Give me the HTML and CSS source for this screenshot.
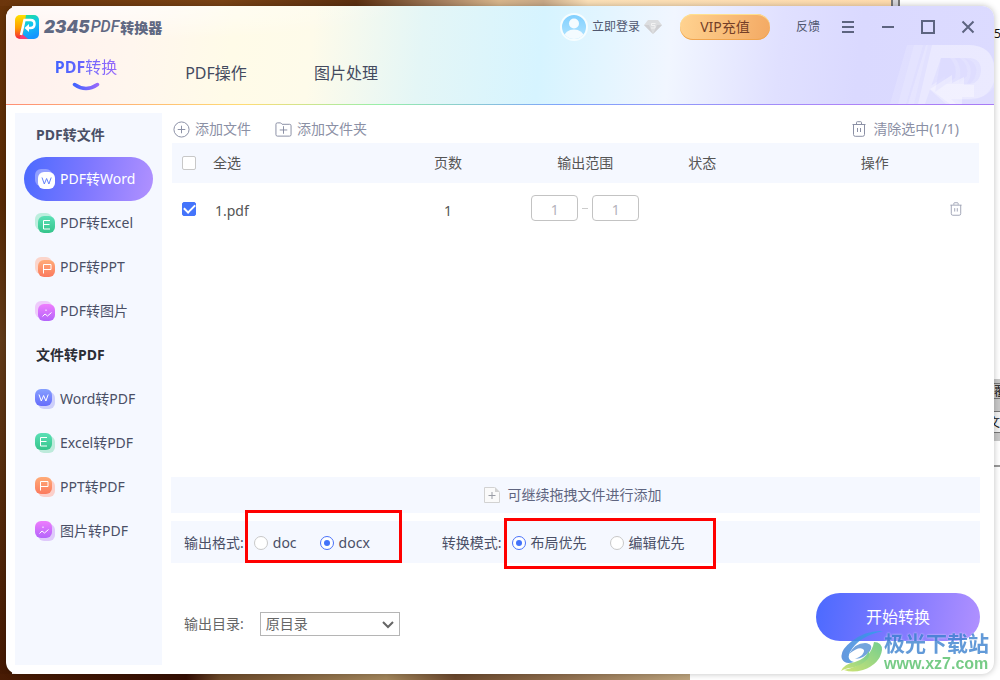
FILE: index.html
```html
<!DOCTYPE html>
<html lang="zh-CN">
<head>
<meta charset="utf-8">
<meta name="viewport" content="width=device-width, initial-scale=1">
<title>2345PDF转换器</title>
<link rel="stylesheet" href="styles.css">
</head>
<body>
<svg class="defs" width="0" height="0" aria-hidden="true">
  <defs>
    <linearGradient id="g-word" x1="0" y1="0" x2="0" y2="1"><stop offset="0" stop-color="#86a0ff"/><stop offset="1" stop-color="#666cfb"/></linearGradient>
    <linearGradient id="g-excel" x1="0" y1="0" x2="0" y2="1"><stop offset="0" stop-color="#5be0b6"/><stop offset="1" stop-color="#35c48b"/></linearGradient>
    <linearGradient id="g-ppt" x1="0" y1="0" x2="0" y2="1"><stop offset="0" stop-color="#ffac78"/><stop offset="1" stop-color="#fb7a5e"/></linearGradient>
    <linearGradient id="g-img" x1="0" y1="0" x2="0" y2="1"><stop offset="0" stop-color="#ee7dfd"/><stop offset="1" stop-color="#b464fb"/></linearGradient>
    <path id="m-word" d="M4 5.500l2.300 6.500 2.300-5.500 2.300 5.500L13.200 5.500" />
    <path id="m-excel" d="M12 4.500H5.500v8.500H12M5.500 8.500h6" />
    <path id="m-ppt" d="M5.500 13.500V4.500h7.500v5h-7.500" />
    <path id="m-img" d="M4.500 12.500l2.500-2.500 2.500 2 4-3.500M8 5.500v1.500" />
    <symbol id="trash" viewBox="0 0 14 16"><path d="M.5 3.500h13M4.500 3V1.500q0-.8.800-.8h3.400q.8 0 .8.800V3M1.500 3.500v10q0 1.800 1.800 1.800h7.400q1.800 0 1.800-1.800v-10M5.500 7v4M8.500 7v4" fill="none" stroke="currentColor"/></symbol>
  </defs>
</svg>

<div class="desktop" aria-hidden="true">
  <div class="desktop-frame"></div>
  <div class="desktop-strip">
    <span class="strip-digit">5</span>
    <div class="strip-panel"><span class="strip-cell">覆</span><span class="strip-cell strip-cell-light">文</span></div>
  </div>
</div>

<div class="window">
  <header class="header">
    <svg class="header-art" viewBox="0 0 104 59" aria-hidden="true">
      <g fill="#fff">
        <path opacity=".15" d="M17 0h16L16 59H0z"/>
        <path opacity=".15" d="M24 0h14L24 59H8z"/>
        <path opacity=".2" d="M36 0h42q24 0 26 22v37H18z"/>
      </g>
      <path fill="#fff" opacity=".28" d="M42 0h38q20 1 24 18v19q-6 17-24 18H67l5 4H56l-18-16 17-12v8h25q10-1 11-13 0-12-11-13H51L35 59H28z"/>
      <path fill="#dcdbff" d="M51 13h9q8 8 5 20l-20 14z" opacity=".8"/>
      <path fill="#dcdbff" d="M65 13h5q9 7 7 18l-8 7q4-16-4-25zM74 13q14 3 12 16-2 9-9 10 9-16-3-26zM66 59l-5-5h18q17 0 25-12v17z" opacity=".6"/>
      <path fill="#fff" opacity=".35" d="M40 44l22-14v8l12-6v8h10v12H72v7H60z"/>
    </svg>
    <div class="titlebar">
      <h1 class="brand">
        <svg class="brand-icon" viewBox="0 0 24 24" aria-hidden="true">
          <defs>
            <linearGradient id="b1" x1="0" y1="0" x2="0" y2="1"><stop offset="0" stop-color="#ffe000"/><stop offset=".55" stop-color="#ff9b00"/><stop offset="1" stop-color="#f4203f"/></linearGradient>
            <linearGradient id="b2" x1="0" y1="0" x2=".3" y2="1"><stop offset="0" stop-color="#25e28d"/><stop offset=".5" stop-color="#11c6ee"/><stop offset="1" stop-color="#1596ff"/></linearGradient>
            <clipPath id="bc"><rect width="24" height="24" rx="5"/></clipPath>
          </defs>
          <g clip-path="url(#bc)"><path fill="url(#b1)" d="M0 0h13L8 24H0z"/><path fill="url(#b2)" d="M11 0h13v24H7z"/><path fill="#f53d78" d="M4 24l3-5 6 5z"/></g>
          <path fill="none" stroke="#fff" stroke-width="2.500" d="M6 20L9.500 5h6q4 0 4 4t-4 4h-3"/>
          <path fill="#fff" d="M14 9v8L9.500 13z"/>
        </svg>
        <span class="brand-num">2345</span><span class="brand-pdf">PDF</span><span class="brand-cn">转换器</span>
      </h1>
      <button class="login" type="button">
        <svg class="avatar" viewBox="0 0 28 28" aria-hidden="true">
          <defs><linearGradient id="av" x1="0" y1="0" x2="0" y2="1"><stop offset="0" stop-color="#7fcfff"/><stop offset="1" stop-color="#b4e5ff"/></linearGradient><clipPath id="ac"><circle cx="14" cy="14" r="12"/></clipPath></defs>
          <circle cx="14" cy="14" r="13" fill="url(#av)" stroke="#f6fdff" stroke-width="2"/>
          <circle cx="14" cy="10.500" r="5" fill="#f4fbff"/><ellipse cx="14" cy="24" rx="10" ry="7.500" fill="#f4fbff" clip-path="url(#ac)"/>
        </svg>
        <span>立即登录</span>
        <svg class="gem" viewBox="0 0 18 14" aria-hidden="true"><path fill="#dcdddf" d="M4 0h10l4 5-9 9-9-9z"/><path fill="#cfcfd2" d="M0 5h5l4 9zM18 5h-5l-4 9z"/><path fill="none" stroke="#f2f2f2" d="M11.500 3.500h-4v2h3.500v2.500h-4"/></svg>
      </button>
      <button class="vip" type="button">VIP充值</button>
      <button class="ctl feedback" type="button">反馈</button>
      <button class="ctl" type="button" aria-label="菜单"><svg viewBox="0 0 14 14"><path d="M1 2h12M1 7h12M1 12h12"/></svg></button>
      <button class="ctl" type="button" aria-label="最小化"><svg viewBox="0 0 14 14"><path d="M1 7h12"/></svg></button>
      <button class="ctl" type="button" aria-label="最大化"><svg viewBox="0 0 14 14"><path d="M1 1h12v12H1z"/></svg></button>
      <button class="ctl" type="button" aria-label="关闭"><svg viewBox="0 0 14 14"><path d="M1.500 1.500l11 11M12.500 1.500l-11 11"/></svg></button>
    </div>
    <nav class="tabs">
      <a class="tab tab-active" href="#convert"><span class="tab-label"><b>PDF</b>转换</span>
        <svg class="smile" viewBox="0 0 28 9" aria-hidden="true"><defs><linearGradient id="sm"><stop offset="0" stop-color="#4263ff"/><stop offset="1" stop-color="#9769fb"/></linearGradient></defs><path d="M2.500 2.500q11.500 8 23 0" fill="none" stroke="url(#sm)" stroke-width="3.500" stroke-linecap="round"/></svg>
      </a>
      <a class="tab" href="#operate">PDF操作</a>
      <a class="tab" href="#image">图片处理</a>
    </nav>
  </header>

  <div class="content">
    <aside class="sidebar">
      <h2 class="side-title">PDF转文件</h2>
      <a class="side-item side-active" href="#w"><svg class="ico" viewBox="0 0 20 20"><rect width="17" height="17" rx="6" fill="#fff" opacity=".35"/><rect x="3" y="3" width="17" height="17" rx="6" fill="#fff"/><use class="ink" href="#m-word" x="3" y="3"/></svg>PDF转Word</a>
      <a class="side-item" href="#e"><svg class="ico" viewBox="0 0 20 20"><rect width="17" height="17" rx="6" fill="#bdeede"/><rect x="3" y="3" width="17" height="17" rx="6" fill="url(#g-excel)"/><use href="#m-excel" x="3" y="3"/></svg>PDF转Excel</a>
      <a class="side-item" href="#p"><svg class="ico" viewBox="0 0 20 20"><rect width="17" height="17" rx="6" fill="#fbd5cb"/><rect x="3" y="3" width="17" height="17" rx="6" fill="url(#g-ppt)"/><use href="#m-ppt" x="3" y="3"/></svg>PDF转PPT</a>
      <a class="side-item" href="#i"><svg class="ico" viewBox="0 0 20 20"><rect width="17" height="17" rx="6" fill="#eecbfb"/><rect x="3" y="3" width="17" height="17" rx="6" fill="url(#g-img)"/><use href="#m-img" x="3" y="3"/></svg>PDF转图片</a>
      <h2 class="side-title side-title-dark">文件转PDF</h2>
      <a class="side-item" href="#wp"><svg class="ico" viewBox="0 0 20 20"><rect x="3" y="3" width="17" height="17" rx="6" fill="#cdcffb"/><rect width="17" height="17" rx="6" fill="url(#g-word)"/><use href="#m-word"/></svg>Word转PDF</a>
      <a class="side-item" href="#ep"><svg class="ico" viewBox="0 0 20 20"><rect x="3" y="3" width="17" height="17" rx="6" fill="#bdeadb"/><rect width="17" height="17" rx="6" fill="url(#g-excel)"/><use href="#m-excel"/></svg>Excel转PDF</a>
      <a class="side-item" href="#pp"><svg class="ico" viewBox="0 0 20 20"><rect x="3" y="3" width="17" height="17" rx="6" fill="#fbcfca"/><rect width="17" height="17" rx="6" fill="url(#g-ppt)"/><use href="#m-ppt"/></svg>PPT转PDF</a>
      <a class="side-item" href="#ip"><svg class="ico" viewBox="0 0 20 20"><rect x="3" y="3" width="17" height="17" rx="6" fill="#dfc9fb"/><rect width="17" height="17" rx="6" fill="url(#g-img)"/><use href="#m-img"/></svg>图片转PDF</a>
    </aside>

    <main class="main">
      <div class="toolbar">
        <button class="tool" type="button"><svg class="tool-add" viewBox="0 0 18 18"><circle cx="9" cy="9" r="8"/><path d="M9 5v8M5 9h8"/></svg>添加文件</button>
        <button class="tool" type="button"><svg class="tool-add" viewBox="0 0 18 18"><path d="M1 14.500v-11Q1 2 2.500 2H6l1.500 1.500h8q1.500 0 1.500 1.500v9.500q0 1.500-1.500 1.500h-13Q1 16 1 14.500zM9 5.500v8M5 9.500h8"/></svg>添加文件夹</button>
        <button class="tool tool-clear" type="button"><svg class="trash-lg"><use href="#trash"/></svg>清除选中(1/1)</button>
      </div>
      <table class="files">
        <colgroup><col class="c-check"><col class="c-name"><col class="c-pages"><col class="c-range"><col class="c-state"><col></colgroup>
        <thead><tr>
          <th><input class="check" type="checkbox" id="all"></th>
          <th class="left"><label for="all">全选</label></th><th>页数</th><th>输出范围</th><th>状态</th><th class="ops">操作</th>
        </tr></thead>
        <tbody><tr>
          <td><input class="check" type="checkbox" id="f1" checked></td>
          <td class="left low"><label for="f1">1.pdf</label></td><td class="low">1</td>
          <td><div class="range"><input class="page" type="text" value="1" aria-label="起始页"><span class="dash"></span><input class="page" type="text" value="1" aria-label="结束页"></div></td>
          <td></td>
          <td class="del"><button type="button" aria-label="删除"><svg class="trash-sm"><use href="#trash"/></svg></button></td>
        </tr></tbody>
      </table>

      <div class="drop">
        <svg class="drop-icon" viewBox="0 0 16 16" aria-hidden="true"><path d="M.5.500h10l5 5v10H.5z" fill="#fafafa" stroke="#d2d2d2"/><path d="M11 0l5 5h-5z" fill="#d2d2d2"/><path d="M8 5v7M4.500 8.500h7" stroke="#999ca5" fill="none"/></svg>
        可继续拖拽文件进行添加
      </div>
      <div class="options">
        <div class="opt opt-format" role="radiogroup" aria-labelledby="lf">
          <span id="lf">输出格式:</span>
          <div class="choices marked mark-format">
            <label class="choice"><input class="radio" type="radio" name="fmt">doc</label>
            <label class="choice"><input class="radio" type="radio" name="fmt" checked>docx</label>
          </div>
        </div>
        <div class="opt" role="radiogroup" aria-labelledby="lm">
          <span id="lm">转换模式:</span>
          <div class="choices marked mark-mode">
            <label class="choice"><input class="radio" type="radio" name="mode" checked>布局优先</label>
            <label class="choice"><input class="radio" type="radio" name="mode">编辑优先</label>
          </div>
        </div>
      </div>
      <div class="footer">
        <label for="dir">输出目录:</label>
        <div class="select-wrap">
          <select id="dir"><option>原目录</option></select>
          <svg viewBox="0 0 12 8" aria-hidden="true"><path d="M1 1l5 5 5-5" fill="none" stroke="#666" stroke-width="2"/></svg>
        </div>
        <button class="start" type="button">开始转换</button>
      </div>
    </main>
  </div>
</div>

<div class="stamp">
  <svg viewBox="0 0 42 42" aria-hidden="true">
    <defs><linearGradient id="s1"><stop offset="0" stop-color="#4a86d8"/><stop offset="1" stop-color="#2fa3ee"/></linearGradient><linearGradient id="s2" x1="0" y1="1" x2="1" y2="0"><stop offset="0" stop-color="#c6de5c"/><stop offset="1" stop-color="#5cc67c"/></linearGradient></defs>
    <path fill="url(#s1)" d="M42 1Q25 0 11 11-2 21 1 29q3 6 12 3-8-2-4-10Q18 6 42 1z"/>
    <path fill="#5b95d8" d="M8 24q6-11 16-11 9 1 5 8-5 7-15 8 10-4 9-9-4-5-15 4z"/>
    <path fill="url(#s2)" d="M33 12q8 0 8 8-2 14-19 20-11 3-19 0 15-3 22-12 7-9 8-16z"/>
    <path fill="url(#s2)" d="M0 41q3-7 14-9 10-3 14-11 2 7-6 12-8 5-14 5-5 1-8 3z"/>
  </svg>
  <div class="stamp-text"><span class="stamp-name">极光下载站</span><span class="stamp-url">www.xz7.com</span></div>
</div>
</body>
</html>
```

FILE: styles.css
```css
* { box-sizing: border-box; }

body {
  position: relative;
  margin: 0;
  min-height: 100vh;
  padding: 6px;
  display: flex;
  overflow: hidden;
  font: 14px/20px "Noto Sans", "Noto Sans CJK SC", sans-serif;
  font-weight: 400;
  color: #4a4f66;
  background: #fff;
}

button, input, select { font: inherit; color: inherit; }
button { border: 0; padding: 0; background: none; cursor: pointer; }
a { color: inherit; text-decoration: none; }
svg { display: block; flex: none; }
.defs { position: absolute; }

/* Desktop behind the window */
.desktop {
  position: absolute;
  inset: 0;
  background:
    linear-gradient(90deg, #6c360c 0, #7a4315 25%, #5c3010 40%, #a98362 50%, #d8b68c 56%, #c8a988 61%, #fbe0b8 66%, #ffdcae 100%) 0 0 / 891px 6px no-repeat,
    linear-gradient(90deg, #491c04 0, #350e03 27%, #6d4a2a 32%, #a2855b 56%, #6b482d 66%, #91704f 82%, #bda47e 100%) 0 100% / 690px 6px no-repeat,
    linear-gradient(#683308 0, #582a05 30%, #623b18 50%, #54290a 75%, #441903 100%) 0 0 / 12px 100% no-repeat;
}
.desktop-frame {
  position: absolute;
  left: 891px;
  top: 0;
  width: 9px;
  height: 20px;
  background: #d5d5da;
  border-left: 2px solid #777;
  border-right: 2px solid #777;
}
.desktop-strip {
  position: absolute;
  right: 0;
  top: 0;
  bottom: 0;
  width: 6px;
  overflow: hidden;
  color: #111;
}
.strip-digit { position: absolute; top: 24px; left: 0; font: 12px/20px "Noto Sans", sans-serif; }
.strip-panel {
  position: absolute;
  top: 379px;
  left: 0;
  width: 20px;
  height: 88px;
  padding-top: 4px;
  background: linear-gradient(#c8c8c8 0, #c8c8c8 62px, #fff 62px, #fff 86px, #999 86px);
}
.strip-cell {
  display: block;
  height: 16px;
  margin-bottom: 12px;
  border-top: 1px solid #777;
  border-bottom: 1px solid #777;
  font: 12px/14px "Noto Sans CJK SC", sans-serif;
}
.strip-cell-light { height: 22px; line-height: 20px; background: #f2f2f2; text-indent: -6px; }

/* Window */
.window {
  position: relative;
  flex: 1;
  display: flex;
  flex-direction: column;
  overflow: hidden;
  border-radius: 12px;
  background: #fff;
  box-shadow: 0 0 6px rgba(0, 0, 0, .25);
}

.header {
  position: relative;
  padding-bottom: 1px;
  background:
    linear-gradient(90deg, #ff8f74, #ffdc75 24%, #97efaa 38%, #7fa5fb 56%, #ad84f8 85%, #a77bf5) 0 100% / 100% 1px no-repeat,
    radial-gradient(ellipse at 8% 0, rgba(255, 255, 255, .7), rgba(255, 255, 255, 0) 25%),
    linear-gradient(96deg, #fff0ee 0, #fff6ee 13%, #fffbe8 23%, #fefbea 31%, #e4f6f6 42%, #d6f4ff 54%, #f1f6ff 67%, #e0e0ff 78%, #dad9ff 86%, #dcdbff 100%);
}
.header-art { position: absolute; right: 0; bottom: 1px; width: 104px; height: 59px; }

.titlebar {
  position: relative;
  display: flex;
  align-items: center;
  height: 42px;
  padding: 0 6px 0 9px;
  color: #50576f;
}
.brand {
  display: flex;
  align-items: center;
  margin: 0 auto 0 0;
  color: #606882;
  font-size: 14px;
}
.brand-icon { width: 24px; height: 24px; margin-right: 5px; }
.brand-num { font: italic 900 17px/20px Inter, sans-serif; }
.brand-pdf { font: italic 500 16px/20px Roboto, sans-serif; margin: 0 1px; }
.brand-cn { font: 900 14px/20px "Noto Sans CJK SC", sans-serif; }
.login { display: flex; align-items: center; gap: 4px; margin-right: 18px; font-size: 12px; }
.avatar { width: 28px; height: 28px; }
.gem { width: 18px; height: 14px; }
.vip {
  width: 90px;
  height: 26px;
  margin-right: 18px;
  border-radius: 13px;
  background: linear-gradient(100deg, #ffd391, #f3a963);
  box-shadow: inset 0 1px #ffe08e, inset 0 -1px #f0a44d;
  color: #743f28;
}
.ctl { width: 40px; height: 28px; display: grid; place-items: center; font-size: 12px; }
.ctl svg { width: 14px; height: 14px; fill: none; stroke: #5d6480; stroke-width: 2; }

.tabs { position: relative; display: flex; height: 56px; padding-left: 15px; font-size: 16px; }
.tab { width: 130px; padding-top: 13px; line-height: 24px; text-align: center; color: #444a5f; }
.tab-active { padding-top: 7px; }
.tab-label {
  background: linear-gradient(90deg, #4263ff, #9769fb);
  -webkit-background-clip: text;
  background-clip: text;
  color: transparent;
}
.tab-label b { font-weight: 700; }
.smile { width: 28px; height: 9px; margin: 3px auto 0; }

.content { flex: 1; display: flex; gap: 9px; padding: 8px 14px 9px 9px; }

/* Sidebar */
.sidebar { width: 147px; flex: none; padding: 0 9px; background: #f5f8ff; }
.side-title { margin: 0; padding-left: 12px; font-size: 14px; font-weight: 700; line-height: 44px; }
.side-title-dark { color: #2b2d35; }
.side-item {
  display: flex;
  align-items: center;
  gap: 5px;
  height: 44px;
  padding-left: 11px;
  border-radius: 22px;
  line-height: 22px;
  white-space: nowrap;
}
.side-active { color: #fff; background: linear-gradient(100deg, #4b6aff, #7f78ff 50%, #b191ff); }
.ico { width: 20px; height: 20px; fill: none; stroke-width: 1; }
.ico use { stroke: #fff; }
.ico .ink { stroke: #6583fb; }

/* Main column */
.main { flex: 1; min-width: 0; display: flex; flex-direction: column; }
.toolbar { display: flex; align-items: center; gap: 24px; height: 30px; padding: 2px 21px 0 2px; color: #8b90a5; }
.tool { display: flex; align-items: center; gap: 5px; }
.tool-add { width: 17px; height: 17px; fill: none; stroke: #868ba2; stroke-width: 1; }
.tool-clear { margin-left: auto; gap: 7px; }
.trash-lg { width: 14px; height: 16px; }
.trash-sm { width: 12px; height: 14px; }

.files { width: calc(100% - 2px); margin: 0 1px; table-layout: fixed; border-collapse: collapse; color: #555; }
.c-check { width: 34px; }
.c-name { width: 23%; }
.c-pages { width: 14%; }
.c-range { width: 20%; }
.c-state { width: 9%; }
.files th, .files td { height: 40px; padding: 0; font-weight: 400; text-align: center; }
.files th { background: #f5f8ff; }
.files td { height: 52px; }
.files .left { padding-left: 7px; text-align: left; }
.files td.low { padding-top: 3px; }
.files td.left { padding-left: 9px; }
.files .ops { padding-left: 32px; }
.files .del { padding-right: 17px; color: #9599ad; }
.del button { display: block; margin-left: auto; }

.check, .radio {
  appearance: none;
  display: grid;
  place-items: center;
  flex: none;
  width: 14px;
  height: 14px;
  margin: 0;
  border: 1px solid #c8c8c8;
  background: #fff;
}
.check { margin: 0 auto; border-radius: 2px; }
.check:checked { border-color: #4474fb; background: #4474fb; }
.check:checked::after {
  content: "";
  width: 9px;
  height: 5px;
  margin-bottom: 3px;
  border-left: 2px solid #fff;
  border-bottom: 2px solid #fff;
  transform: rotate(-45deg);
}
.radio { border-radius: 50%; }
.radio:checked { border-color: #4a72fa; }
.radio:checked::after { content: ""; width: 6px; height: 6px; border-radius: 50%; background: #4373fa; }

.range { display: flex; align-items: center; justify-content: center; gap: 4px; padding-bottom: 2px; }
.page {
  width: 47px;
  height: 26px;
  padding: 2px 0 0;
  border: 1px solid #c3c3c3;
  border-radius: 4px;
  background: #fff;
  color: #b4b4bc;
  text-align: center;
}
.dash { width: 6px; height: 1px; background: #ccc; }

.drop {
  display: flex;
  align-items: center;
  justify-content: center;
  gap: 8px;
  height: 36px;
  margin: auto 0 8px;
  padding-right: 6px;
  background: #f5f8ff;
  color: #5f6580;
}
.drop-icon { width: 16px; height: 16px; }
.options { display: flex; gap: 72px; height: 42px; padding: 2px 0 0 13px; background: #f5f8ff; }
.opt, .choices, .choice { display: flex; align-items: center; }
.opt { gap: 10px; }
.choices { position: relative; gap: 23px; }
.choice { gap: 5px; }

/* Red callouts around the radio groups */
.marked::after { content: ""; position: absolute; border: 3px solid #f00; pointer-events: none; }
.mark-format::after { inset: -23px -32px -10px -9px; }
.mark-mode::after { inset: -15px -31px -16px -8px; }

.footer { display: flex; align-items: center; height: 48px; margin: 30px 0 24px; padding-left: 13px; color: #666; }
.select-wrap { position: relative; width: 140px; margin: 14px auto 0 16px; }
.footer label { margin-top: 14px; }
.select-wrap select {
  appearance: none;
  display: block;
  width: 100%;
  height: 24px;
  padding: 0 24px 0 5px;
  border: 1px solid #b5b5b5;
  border-radius: 0;
  background: #fff;
}
.select-wrap svg { position: absolute; right: 6px; top: 9px; width: 12px; height: 8px; pointer-events: none; }
.start {
  width: 164px;
  height: 48px;
  border-radius: 24px;
  background: linear-gradient(100deg, #4b6aff, #7f78ff 50%, #b191ff);
  color: #fff;
  font-size: 16px;
}

/* Site stamp over the lower right corner */
.stamp { position: absolute; right: 11px; bottom: 7px; display: flex; align-items: center; gap: 1px; pointer-events: none; }
.stamp svg { width: 42px; height: 42px; opacity: .85; }
.stamp-text { display: flex; flex-direction: column; opacity: .8; text-shadow: 0 0 2px #fff; }
.stamp-name { font: 700 21px/26px "Noto Sans CJK SC", sans-serif; color: #3c82cf; }
.stamp-url { font: 700 16px/18px "Liberation Sans", sans-serif; color: #55bf69; }
```
